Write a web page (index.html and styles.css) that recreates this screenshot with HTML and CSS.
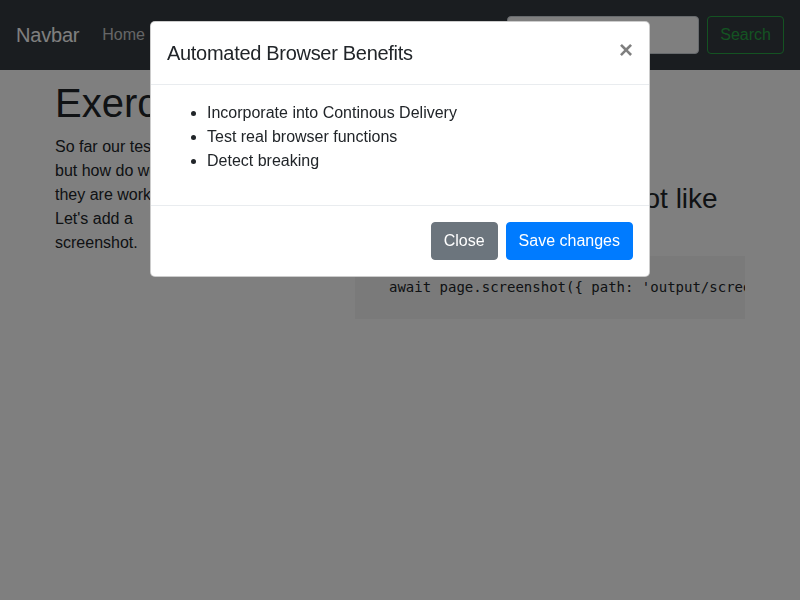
FILE: index.html
```html
<!DOCTYPE html>
<html lang="en">
<head>
<meta charset="utf-8">
<title>Exercise</title>
<link rel="stylesheet" href="styles.css">
</head>
<body>
<nav class="navbar">
  <a class="brand" href="#">Navbar</a>
  <ul class="nav">
    <li><a class="nav-link active" href="#">Home</a></li>
    <li><a class="nav-link" href="#">Link</a></li>
    <li><a class="nav-link" href="#">Disabled</a></li>
  </ul>
  <form class="search">
    <input class="search-input" type="search" placeholder="Search">
    <button class="btn-outline" type="button">Search</button>
  </form>
</nav>

<main class="container">
  <div class="row">
    <section class="col-left">
      <h1 class="page-title">Exercise</h1>
      <p class="lead-text">So far our tests run, but how do we know they are working? Let's add a screenshot.</p>
    </section>
    <section class="col-right">
      <h3 class="step-title">Capturing the screenshot like this</h3>
      <pre class="code-block"><code>await page.screenshot({ path: 'output/screenshot.png' });</code></pre>
    </section>
  </div>
</main>

<div class="backdrop"></div>

<div class="modal-wrap">
  <div class="modal">
    <div class="modal-header">
      <h5 class="modal-title">Automated Browser Benefits</h5>
      <button class="close" type="button" aria-label="Close">×</button>
    </div>
    <div class="modal-body">
      <ul class="benefits">
        <li>Incorporate into Continous Delivery</li>
        <li>Test real browser functions</li>
        <li>Detect breaking</li>
      </ul>
    </div>
    <div class="modal-footer">
      <button class="btn btn-secondary" type="button">Close</button>
      <button class="btn btn-primary" type="button">Save changes</button>
    </div>
  </div>
</div>
</body>
</html>
```

FILE: styles.css
```css
* { box-sizing: border-box; }

html, body {
  margin: 0;
  padding: 0;
}

body {
  font-family: "Liberation Sans", Arial, sans-serif;
  font-size: 16px;
  line-height: 1.5;
  color: #212529;
  background: #fff;
  height: 600px;
  overflow: hidden;
}

/* Navbar */
.navbar {
  display: flex;
  align-items: center;
  height: 70px;
  padding: 16px 16px;
  background: #343a40;
}

.brand {
  font-size: 20px;
  line-height: 30px;
  color: #fff;
  text-decoration: none;
  margin-right: 15px;
  letter-spacing: -0.2px;
}

.nav {
  display: flex;
  list-style: none;
  margin: 0 auto 0 0;
  padding: 0;
}

.nav-link {
  display: block;
  padding: 8px;
  color: rgba(255, 255, 255, 0.5);
  text-decoration: none;
}

.nav-link.active {
  color: rgba(255, 255, 255, 0.75);
}

.search {
  display: flex;
  align-items: center;
}

.search-input {
  width: 192px;
  height: 38px;
  margin-right: 8px;
  padding: 6px 12px;
  font: inherit;
  color: #495057;
  background: #fff;
  border: 1px solid #ced4da;
  border-radius: 4px;
}

.btn-outline {
  height: 38px;
  padding: 6px 12px;
  font: inherit;
  color: #28a745;
  background: transparent;
  border: 1px solid #28a745;
  border-radius: 4px;
}

/* Page content */
.container {
  width: 690px;
  margin: 0 auto;
  padding-top: 9px;
}

.row {
  display: grid;
  grid-template-columns: 150px 390px;
  justify-content: space-between;
}

.page-title {
  margin: 0 0 8px;
  font-size: 40px;
  font-weight: 500;
  line-height: 1.2;
  white-space: nowrap;
}

.lead-text {
  margin: 0 0 16px;
}

.step-title {
  margin: 103px 0 7px;
  font-size: 28px;
  font-weight: 500;
  line-height: 1.2;
}

.code-block {
  margin: 0;
  padding: 20px 34px;
  background: #f5f5f5;
  overflow: hidden;
  white-space: pre;
  font-family: "DejaVu Sans Mono", Menlo, monospace;
  font-size: 14px;
  line-height: 23px;
  color: #212529;
}

/* Backdrop and modal */
.backdrop {
  position: fixed;
  inset: 0;
  background: #000;
  opacity: 0.5;
}

.modal-wrap {
  position: fixed;
  inset: 0;
}

.modal {
  width: 500px;
  margin: 21px auto 0;
  background: #fff;
  border: 1px solid rgba(0, 0, 0, 0.2);
  border-radius: 5px;
}

.modal-header {
  display: flex;
  align-items: flex-start;
  padding: 16px;
  border-bottom: 1px solid #e9ecef;
}

.modal-title {
  margin: 0;
  font-size: 20px;
  font-weight: 500;
  line-height: 1.5;
  letter-spacing: -0.3px;
}

.close {
  margin: -16px -16px -16px auto;
  padding: 16px;
  font-family: "Liberation Sans", Arial, sans-serif;
  font-size: 24px;
  font-weight: 700;
  line-height: 1;
  color: #000;
  text-shadow: 0 1px 0 #fff;
  opacity: 0.5;
  background: transparent;
  border: 0;
}

.modal-body {
  padding: 16px;
}

.benefits {
  margin: 0 0 16px;
  padding-left: 40px;
}

.modal-footer {
  display: flex;
  justify-content: flex-end;
  align-items: center;
  padding: 12px;
  border-top: 1px solid #e9ecef;
}

.btn {
  margin: 4px;
  padding: 6px 12px;
  font: inherit;
  line-height: 24px;
  color: #fff;
  border: 1px solid transparent;
  border-radius: 4px;
}

.btn-secondary {
  background: #6c757d;
  border-color: #6c757d;
}

.btn-primary {
  background: #007bff;
  border-color: #007bff;
}
```
